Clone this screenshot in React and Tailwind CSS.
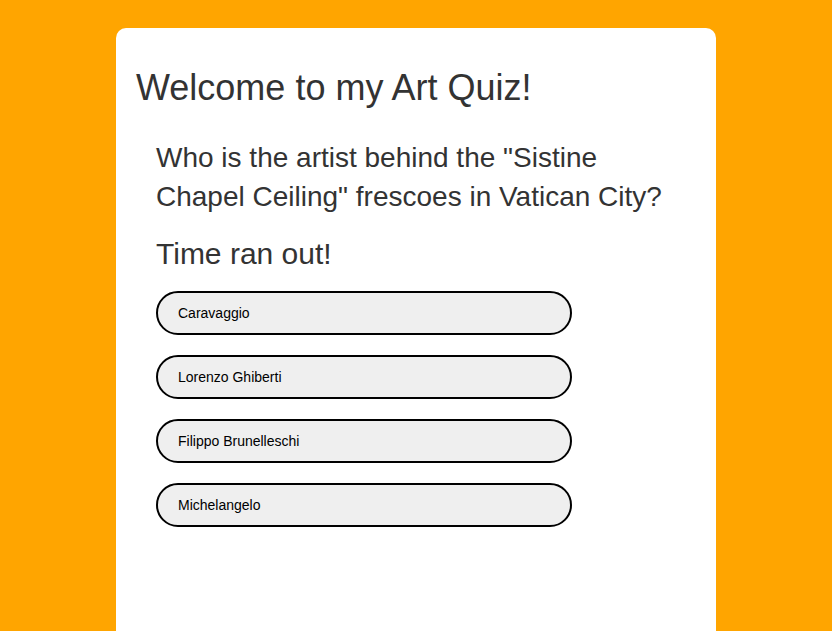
export default function App() {
  const answers = ['Caravaggio', 'Lorenzo Ghiberti', 'Filippo Brunelleschi', 'Michelangelo']

  return (
    <div className="min-h-screen bg-[#ffa500] pt-[28px] font-['Liberation_Sans',Arial,sans-serif]">
      <div className="mx-auto min-h-[603px] w-[600px] rounded-t-[10px] bg-white px-5 pt-[39px] text-[#333]">
        <h1 className="text-[36px] leading-[41px]">Welcome to my Art Quiz!</h1>

        <div className="mt-[30px] px-5">
          <p className="text-[28px] leading-[39px]">
            Who is the artist behind the "Sistine Chapel Ceiling" frescoes in Vatican City?
          </p>
          <p className="mt-[17px] text-[30px] leading-[42px]">Time ran out!</p>

          <div className="mt-[16px] flex flex-col gap-5">
            {answers.map((answer) => (
              <button
                key={answer}
                className="h-[44px] w-[416px] rounded-full border-2 border-black bg-[#efefef] px-5 text-left text-[14px] text-black"
              >
                {answer}
              </button>
            ))}
          </div>
        </div>
      </div>
    </div>
  )
}
